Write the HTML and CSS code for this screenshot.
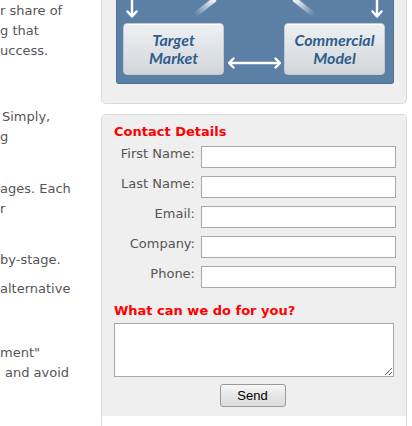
FILE: index.html
```html
<!DOCTYPE html>
<html lang="en">
<head>
<meta charset="utf-8">
<title>Contact</title>
<link rel="stylesheet" href="styles.css">
</head>
<body>
<div class="page">
  <div class="article">
    <div class="para g1">
      <div class="ln">r share of</div>
      <div class="ln">g that</div>
      <div class="ln">uccess.</div>
    </div>
    <div class="para g2">
      <div class="ln ind2">Simply,</div>
      <div class="ln">g</div>
    </div>
    <div class="para g3">
      <div class="ln">ages. Each</div>
      <div class="ln">r</div>
    </div>
    <div class="para g4">
      <div class="ln">by-stage.</div>
    </div>
    <div class="para g5">
      <div class="ln">alternative</div>
    </div>
    <div class="para g6">
      <div class="ln">ment"</div>
      <div class="ln ind4">and avoid</div>
    </div>
  </div>

  <aside class="sidebar">
    <div class="panel panel-diagram">
      <div class="diagram">
        <svg class="diagram-art" viewBox="0 0 278 84" width="278" height="84" aria-hidden="true">
          <defs>
            <linearGradient id="rayL" x1="99" y1="0" x2="79" y2="15" gradientUnits="userSpaceOnUse">
              <stop offset="0" stop-color="#ffffff" stop-opacity="0.95"/>
              <stop offset="1" stop-color="#ffffff" stop-opacity="0"/>
            </linearGradient>
            <linearGradient id="rayR" x1="178" y1="0" x2="198" y2="15" gradientUnits="userSpaceOnUse">
              <stop offset="0" stop-color="#ffffff" stop-opacity="0.95"/>
              <stop offset="1" stop-color="#ffffff" stop-opacity="0"/>
            </linearGradient>
          </defs>
          <line x1="99" y1="-1" x2="79" y2="15" stroke="url(#rayL)" stroke-width="5"/>
          <line x1="178" y1="-1" x2="198" y2="15" stroke="url(#rayR)" stroke-width="5"/>
          <g fill="none" stroke="#ffffff" stroke-width="2.4" stroke-linecap="round" stroke-linejoin="round">
            <path d="M16 0 V16 M11.5 11.5 L16 16.5 L20.5 11.5"/>
            <path d="M261 0 V16 M256.5 11.5 L261 16.5 L265.5 11.5"/>
            <path d="M113 63 H164 M117.5 58.5 L113 63 L117.5 67.5 M159.5 58.5 L164 63 L159.5 67.5"/>
          </g>
        </svg>
        <div class="box">Target<br>Market</div>
        <div class="box">Commercial<br>Model</div>
      </div>
    </div>

    <form class="panel panel-contact">
      <div class="contact-body">
        <h3 class="form-title">Contact Details</h3>
        <div class="rows">
          <div class="row"><label class="lbl" for="fn">First Name:</label><input class="field" id="fn" type="text"></div>
          <div class="row"><label class="lbl" for="ln">Last Name:</label><input class="field" id="ln" type="text"></div>
          <div class="row"><label class="lbl" for="em">Email:</label><input class="field" id="em" type="text"></div>
          <div class="row"><label class="lbl" for="co">Company:</label><input class="field" id="co" type="text"></div>
          <div class="row"><label class="lbl" for="ph">Phone:</label><input class="field" id="ph" type="text"></div>
        </div>
        <h3 class="form-title q">What can we do for you?</h3>
        <textarea class="message"></textarea>
        <div class="actions"><button class="send" type="button">Send</button></div>
      </div>
    </form>
  </aside>
</div>
</body>
</html>
```

FILE: styles.css
```css
html, body {
  margin: 0;
  padding: 0;
  background: #ffffff;
}

body {
  font-family: "DejaVu Sans", Verdana, sans-serif;
  font-size: 13px;
  color: #555555;
  overflow: hidden;
  height: 426px;
}

.page {
  display: flex;
  align-items: flex-start;
}

/* left article column (scrolled, clipped) */
.article {
  width: 101px;
  flex: none;
  overflow: hidden;
  line-height: 20px;
  color: #555557;
}

.ln {
  white-space: nowrap;
  height: 20px;
}

.ind2 { padding-left: 2px; }
.ind4 { padding-left: 5px; }

.g1 { margin-top: 1px; }
.g2 { margin-top: 46px; }
.g3 { margin-top: 32px; }
.g4 { margin-top: 31px; }
.g5 { margin-top: 9px; }
.g6 { margin-top: 44px; }

/* sidebar */
.sidebar {
  width: 306px;
  flex: none;
  display: flex;
  flex-direction: column;
  gap: 10px;
}

.panel {
  background: #efefef;
  border: 1px solid #dadada;
  border-radius: 5px;
}

.panel-diagram {
  border-top: none;
  border-radius: 0 0 5px 5px;
  padding: 0 12px 19px 14px;
}

.diagram {
  position: relative;
  width: 278px;
  height: 84px;
  box-sizing: border-box;
  background: #5c80a5;
  border: 1px solid #4f7399;
  border-top: none;
  border-radius: 0 0 3px 3px;
  display: flex;
  gap: 60px;
  padding: 23px 0 0 6px;
}

.diagram-art {
  position: absolute;
  left: -1px;
  top: 0;
}

.box {
  width: 101px;
  height: 52px;
  box-sizing: border-box;
  border-radius: 4px;
  background: linear-gradient(#eef0f2, #dfe2e5 55%, #d2d6da);
  border: 1px solid #c3cad1;
  box-shadow: inset 0 1px 0 #ffffff;
  display: flex;
  align-items: center;
  justify-content: center;
  text-align: center;
  font-family: Lato, "Open Sans", sans-serif;
  font-style: italic;
  font-weight: 700;
  font-size: 16px;
  line-height: 18px;
  color: #2f5d8d;
}

/* contact form */
.panel-contact {
  margin: 0;
  border-bottom: none;
  border-radius: 5px 5px 0 0;
  background: #ffffff;
  height: 330px;
}

.contact-body {
  background: #efefef;
  border-radius: 5px 5px 0 0;
  padding: 9px 10px 9px 12px;
}

.form-title {
  margin: 0;
  font-size: 13px;
  font-weight: 700;
  line-height: 15px;
  color: #ff0000;
}

.rows {
  display: flex;
  flex-direction: column;
  gap: 8px;
  margin-top: 7px;
}

.row {
  display: flex;
  align-items: flex-start;
  gap: 6px;
}

.lbl {
  width: 81px;
  text-align: right;
  line-height: 15px;
  color: #555555;
  white-space: nowrap;
}

.field {
  width: 195px;
  height: 22px;
  box-sizing: border-box;
  margin: 0;
  padding: 1px 3px;
  border: 1px solid #a9a9a9;
  background: #ffffff;
  font-family: "DejaVu Sans", sans-serif;
  font-size: 13px;
}

.q {
  margin-top: 15px;
}

.message {
  display: block;
  width: 280px;
  height: 54px;
  box-sizing: border-box;
  margin: 5px 0 0 0;
  border: 1px solid #a9a9a9;
  background: #ffffff;
  resize: both;
  font-family: "DejaVu Sans", sans-serif;
  font-size: 13px;
}

.actions {
  display: flex;
  justify-content: center;
  margin-top: 7px;
  padding-right: 5px;
}

.send {
  width: 66px;
  height: 23px;
  box-sizing: border-box;
  margin: 0;
  padding: 0;
  border: 1px solid #9a9a9a;
  border-radius: 3px;
  background: linear-gradient(#f7f7f7, #e6e6e6 50%, #dcdcdc);
  font-family: "Liberation Sans", Arial, sans-serif;
  font-size: 13px;
  color: #000000;
}
```
